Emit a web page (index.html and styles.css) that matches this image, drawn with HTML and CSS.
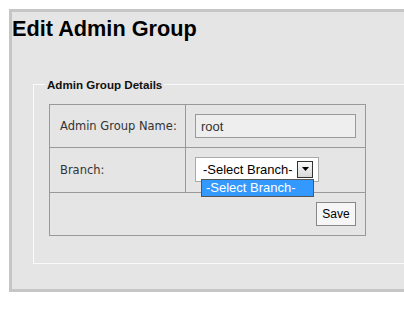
FILE: index.html
```html
<!DOCTYPE html>
<html lang="en">
<head>
    <meta charset="UTF-8">
    <title>Edit Admin Group</title>
    <link rel="stylesheet" href="styles.css">
</head>
<body>
<div class="panel">
    <h1 class="page-title">Edit Admin Group</h1>

    <fieldset class="details">
        <legend>Admin Group Details</legend>
        <table class="form-table">
            <tr class="row-name">
                <td class="label">Admin Group Name:</td>
                <td class="field"><input type="text" class="text-input" value="root"></td>
            </tr>
            <tr class="row-branch">
                <td class="label">Branch:</td>
                <td class="field">
                    <div class="select-box">
                        <span class="select-text">-Select Branch-</span>
                        <span class="select-arrow">
                            <svg width="7" height="4" viewBox="0 0 7 4"><path d="M0 0h7L3.5 4z" fill="#000"/></svg>
                        </span>
                        <div class="select-list">-Select Branch-</div>
                    </div>
                </td>
            </tr>
            <tr class="row-actions">
                <td colspan="2" class="actions"><button class="save-btn">Save</button></td>
            </tr>
        </table>
    </fieldset>
</div>
</body>
</html>
```

FILE: styles.css
```css
body {
    margin: 0;
    background: #fff;
    font-family: 'Liberation Sans', Arial, sans-serif;
    color: #000;
}

.panel {
    margin: 9px 0 0 9px;
    height: 277px;
    background: #e5e5e5;
    border-top: 3px solid #c6c6c6;
    border-left: 3px solid #c6c6c6;
    border-bottom: 3px solid #c6c6c6;
}

.page-title {
    margin: 0;
    padding-top: 4px;
    font-size: 21.7px;
    line-height: 25px;
    font-weight: bold;
}

.details {
    margin: 37px 0 0 21px;
    padding: 13px 0 27px 15px;
    border: 1px solid #fafafa;
    border-right: none;
}

.details legend {
    padding: 0 2px;
    margin-left: -4px;
    font-size: 11.6px;
    font-weight: bold;
    color: #111;
}

.form-table {
    border-collapse: collapse;
    width: 317px;
}

.form-table td {
    border: 1px solid #999;
    padding: 0;
}

.form-table .label {
    width: 125px;
    padding-left: 10px;
    font-family: 'DejaVu Sans', Verdana, sans-serif;
    font-size: 11.5px;
    color: #333;
}

.row-name td {
    height: 42px;
}

.row-branch td {
    height: 44px;
}

.row-actions td {
    height: 42px;
}

.form-table .field {
    padding-left: 9px;
}

.text-input {
    box-sizing: border-box;
    width: 161px;
    height: 24px;
    margin: 0;
    padding: 0 5px;
    border: 1px solid #999;
    background: #eee;
    font-family: 'Liberation Sans', Arial, sans-serif;
    font-size: 13px;
    color: #333;
}

.select-box {
    position: relative;
    box-sizing: border-box;
    width: 124px;
    height: 25px;
    margin-top: -2px;
    display: flex;
    align-items: center;
    background: #fff;
    border: 1px solid #aaa;
    font-size: 13px;
}

.select-text {
    padding-left: 7px;
    flex: 1;
}

.select-arrow {
    box-sizing: border-box;
    width: 16px;
    height: 17px;
    margin-right: 5px;
    display: flex;
    align-items: center;
    justify-content: center;
    border: 1px solid #333;
    background: linear-gradient(#fafafa, #d8d8d8);
}

.select-list {
    position: absolute;
    left: 5px;
    top: 21px;
    box-sizing: border-box;
    width: 113px;
    height: 18px;
    padding-left: 4px;
    line-height: 16px;
    background: #3399ff;
    border: 1px solid #555;
    color: #fff;
    font-size: 13px;
}

.form-table .actions {
    text-align: right;
    padding-right: 9px;
    vertical-align: middle;
}

.save-btn {
    box-sizing: border-box;
    width: 40px;
    height: 24px;
    padding: 0;
    background: #f6f6f6;
    border: 1px solid #888;
    font-family: 'Liberation Sans', Arial, sans-serif;
    font-size: 12px;
    color: #000;
}
```
